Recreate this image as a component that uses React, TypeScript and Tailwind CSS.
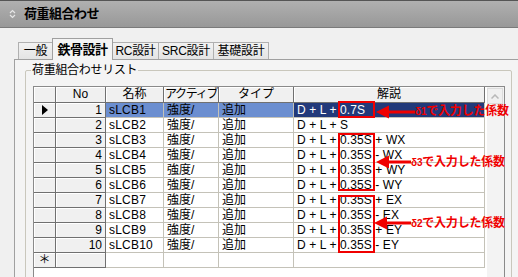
import React from "react"

const rows = [
  { no: 1, name: "sLCB1", desc: "0.7S", tail: "" },
  { no: 2, name: "sLCB2", desc: "S", tail: "" },
  { no: 3, name: "sLCB3", desc: "0.35S", tail: " + WX" },
  { no: 4, name: "sLCB4", desc: "0.35S", tail: " - WX" },
  { no: 5, name: "sLCB5", desc: "0.35S", tail: " + WY" },
  { no: 6, name: "sLCB6", desc: "0.35S", tail: " - WY" },
  { no: 7, name: "sLCB7", desc: "0.35S", tail: " + EX" },
  { no: 8, name: "sLCB8", desc: "0.35S", tail: " - EX" },
  { no: 9, name: "sLCB9", desc: "0.35S", tail: " + EY" },
  { no: 10, name: "sLCB10", desc: "0.35S", tail: " - EY" },
]

const tabs = [
  { label: "一般", w: "w-[35px]" },
  { label: "鉄骨設計", w: "w-[61px]" },
  { label: "RC設計", w: "w-[47px]" },
  { label: "SRC設計", w: "w-[56px]" },
  { label: "基礎設計", w: "w-[56px]" },
]

function Arrow({ x, y, len }: { x: number; y: number; len: number }) {
  return (
    <svg
      className="absolute"
      style={{ left: x, top: y - 7 }}
      width={len}
      height={14}
      viewBox={`0 0 ${len} 14`}
    >
      <polygon points={`0,7 13,0.5 13,13.5`} fill="#f00000" />
      <rect x={12} y={5.5} width={len - 12} height={3} fill="#f00000" />
    </svg>
  )
}

function Note({ x, y, n }: { x: number; y: number; n: string }) {
  return (
    <div
      className="absolute whitespace-nowrap font-bold text-[#f00000] text-[12px] leading-[14px] tracking-[-0.2px]"
      style={{ left: x, top: y }}
    >
      <span className="text-[10px]">δ{n}</span>で入力した係数
    </div>
  )
}

export default function App() {
  const sysCell =
    "h-full whitespace-nowrap overflow-hidden border-r border-b border-[#707070] bg-[#f0f0f0] shadow-[inset_1px_1px_0_#ffffff]"
  const dataCell = "h-full overflow-hidden border-r border-b border-[#c4c2b8] pl-[3px] whitespace-pre"

  return (
    <div
      className="relative w-[518px] h-[277px] overflow-hidden bg-[#f0f0f0] flex flex-col text-black"
      style={{ fontFamily: '"Liberation Sans", "Noto Sans CJK JP", sans-serif' }}
    >
      {/* タイトルバー */}
      <div className="h-[28px] shrink-0 flex items-center gap-[8px] pl-[9px] border-t border-[#555] border-b border-b-[#7a7a7a] bg-gradient-to-b from-[#b0b0b0] to-[#989898]">
        <svg width="7" height="10" viewBox="0 0 7 10">
          <path d="M1 4 L3.5 1.5 L6 4 M1 6 L3.5 8.5 L6 6" stroke="#e6e6e6" strokeWidth="1.2" fill="none" />
        </svg>
        <span className="text-[13px] font-bold tracking-[-0.5px]">荷重組合わせ</span>
      </div>

      {/* タブ */}
      <div className="h-[31px] shrink-0 flex items-end pl-[18px] text-[12px]">
        {tabs.map((t, i) =>
          i === 1 ? (
            <div
              key={t.label}
              className={`${t.w} shrink-0 relative z-10 -mb-px -ml-px h-[22px] flex items-center justify-center border border-b-0 border-[#a0a0a0] bg-[#f4f4f4] font-bold text-[13px] tracking-[-0.5px]`}
            >
              {t.label}
            </div>
          ) : (
            <div
              key={t.label}
              className={`${t.w} shrink-0 h-[17px] flex items-center justify-center border border-b-0 border-[#b0b0b0] bg-gradient-to-b from-[#f2f2f2] to-[#e4e4e4] -ml-px first:ml-0 tracking-[-0.3px] whitespace-nowrap`}
            >
              {t.label}
            </div>
          )
        )}
      </div>

      {/* パネル */}
      <div className="flex-1 ml-[14px] border-l border-t border-[#a0a0a0] bg-[#f4f4f4] pl-[10px] pt-[10px]">
        <div className="relative w-[487px] h-[300px] border border-[#c9c7bc] rounded-[2px] pl-[7px] pt-[15px]">
          <div className="absolute -top-[8px] left-[5px] px-[1px] bg-[#f4f4f4] text-[12px] leading-[15px] tracking-[-0.3px]">
            荷重組合わせリスト
          </div>

          {/* グリッド */}
          <div className="w-[472px] h-[260px] border border-[#8a8a8a] bg-white flex gap-[2px] text-[12px] leading-[14px]">
            <div className="w-[451px] flex flex-col">
              <div className="h-[16px] flex text-center leading-[15px]">
                <div className={`w-[22px] ${sysCell}`} />
                <div className={`w-[50px] ${sysCell}`}>No</div>
                <div className={`w-[58px] ${sysCell}`}>名称</div>
                <div className={`w-[55px] ${sysCell} tracking-[-1.3px]`}>アクティブ</div>
                <div className={`w-[75px] ${sysCell}`}>タイプ</div>
                <div className={`w-[191px] ${sysCell}`}>解説</div>
              </div>
              {rows.map((r) => {
                const sel = r.no === 1
                return (
                  <div key={r.no} className="h-[15px] flex">
                    <div className={`w-[22px] ${sysCell} flex items-center pl-[8px]`}>
                      {sel && (
                        <svg width="6" height="10" viewBox="0 0 6 10">
                          <polygon points="0,0 6,5 0,10" fill="#000" />
                        </svg>
                      )}
                    </div>
                    <div className={`w-[50px] ${sysCell} text-right pr-[3px]`}>{r.no}</div>
                    <div className={`w-[58px] ${dataCell} tracking-[0.2px] ${sel ? "bg-[#6b8ed0]" : ""}`}>{r.name}</div>
                    <div className={`w-[55px] ${dataCell} ${sel ? "bg-[#6b8ed0]" : ""}`}>強度/</div>
                    <div className={`w-[75px] ${dataCell} ${sel ? "bg-[#6b8ed0]" : ""}`}>追加</div>
                    <div className={`w-[191px] ${dataCell} tracking-[0.1px] ${sel ? "bg-[#22397a] text-white" : ""}`}>
                      {"D + L + " + r.desc + r.tail}
                    </div>
                  </div>
                )
              })}
              <div className="h-[15px] flex">
                <div className={`w-[22px] ${sysCell} text-center text-[12px] leading-[15px]`}>＊</div>
                <div className={`w-[50px] ${sysCell}`} />
                <div className={`w-[58px] ${dataCell}`} />
                <div className={`w-[55px] ${dataCell}`} />
                <div className={`w-[75px] ${dataCell}`} />
                <div className={`w-[191px] ${dataCell}`} />
              </div>
            </div>

            {/* スクロールバー */}
            <div className="w-[17px] bg-[#f3f3f3] pt-[1px]">
              <div className="h-[16px] w-[16px] border border-[#dcdcdc] bg-[#f0f0f0] flex items-center justify-center">
                <svg width="8" height="5" viewBox="0 0 8 5">
                  <path d="M0.5 4.5 L4 1 L7.5 4.5" stroke="#b8b8b8" strokeWidth="1.5" fill="none" />
                </svg>
              </div>
            </div>
          </div>
        </div>
      </div>

      {/* 注記 */}
      <div className="absolute left-[338px] top-[101px] w-[37px] h-[17px] border-2 border-[#f00000]" />
      <div className="absolute left-[338px] top-[133px] w-[37px] h-[58px] border-2 border-[#f00000]" />
      <div className="absolute left-[338px] top-[195px] w-[37px] h-[58px] border-2 border-[#f00000]" />

      <Arrow x={376} y={112} len={39} />
      <Arrow x={376} y={162} len={35} />
      <Arrow x={374} y={223} len={37} />

      <Note x={415} y={104} n="1" />
      <Note x={411} y={155} n="3" />
      <Note x={411} y={216} n="2" />
    </div>
  )
}
